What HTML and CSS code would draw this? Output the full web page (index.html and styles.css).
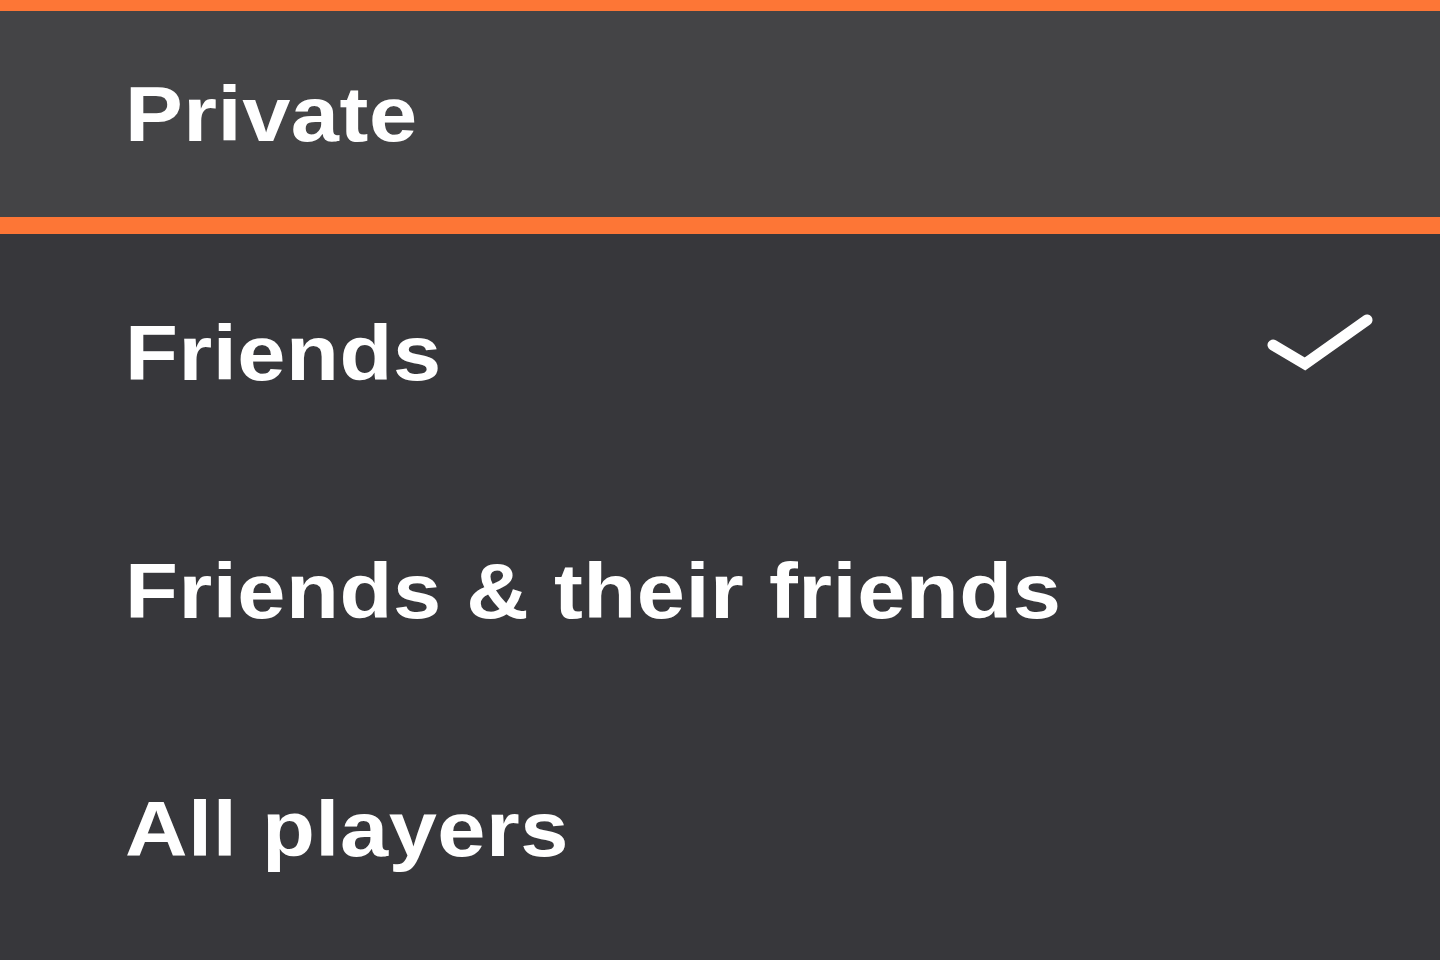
FILE: index.html
```html
<!DOCTYPE html>
<html lang="en">
<head>
    <meta charset="UTF-8">
    <meta name="viewport" content="width=device-width, initial-scale=1.0">
    <title>Visibility</title>
    <link rel="stylesheet" href="styles.css">
</head>
<body>
    <ul class="menu">
        <li class="menu-item selected"><span class="label">Private</span></li>
        <li class="menu-item">
            <span class="label">Friends</span>
            <svg class="check" width="110" height="70" viewBox="0 0 110 70">
                <polyline points="7,37 39,56 101,12" fill="none" stroke="#fff" stroke-width="11" stroke-linejoin="miter" stroke-linecap="round"/>
            </svg>
        </li>
        <li class="menu-item"><span class="label">Friends &amp; their friends</span></li>
        <li class="menu-item"><span class="label">All players</span></li>
    </ul>
</body>
</html>
```

FILE: styles.css
```css
/* Dark dropdown list */
body {
    margin: 0;
    padding: 0;
    background-color: #37373b;
    font-family: "Liberation Sans", Arial, sans-serif;
    color: #fff;
}
.menu {
    list-style: none;
    margin: 0;
    padding: 0;
}
.menu-item {
    height: 238px;
    box-sizing: border-box;
    padding-left: 125px;
    padding-right: 64px;
    display: flex;
    align-items: center;
    justify-content: space-between;
    font-size: 78px;
    font-weight: bold;
    letter-spacing: 0.5px;
    line-height: 1;
}
/* Text is drawn a bit wider than normal */
.label {
    display: inline-block;
    transform: scaleX(1.11);
    transform-origin: left center;
}
/* Selected row with orange borders */
.menu-item.selected {
    height: 234px;
    background-color: #444446;
    border-top: 11px solid #fd7636;
    border-bottom: 17px solid #fd7636;
}
.check {
    margin-top: -20px;
}
```
